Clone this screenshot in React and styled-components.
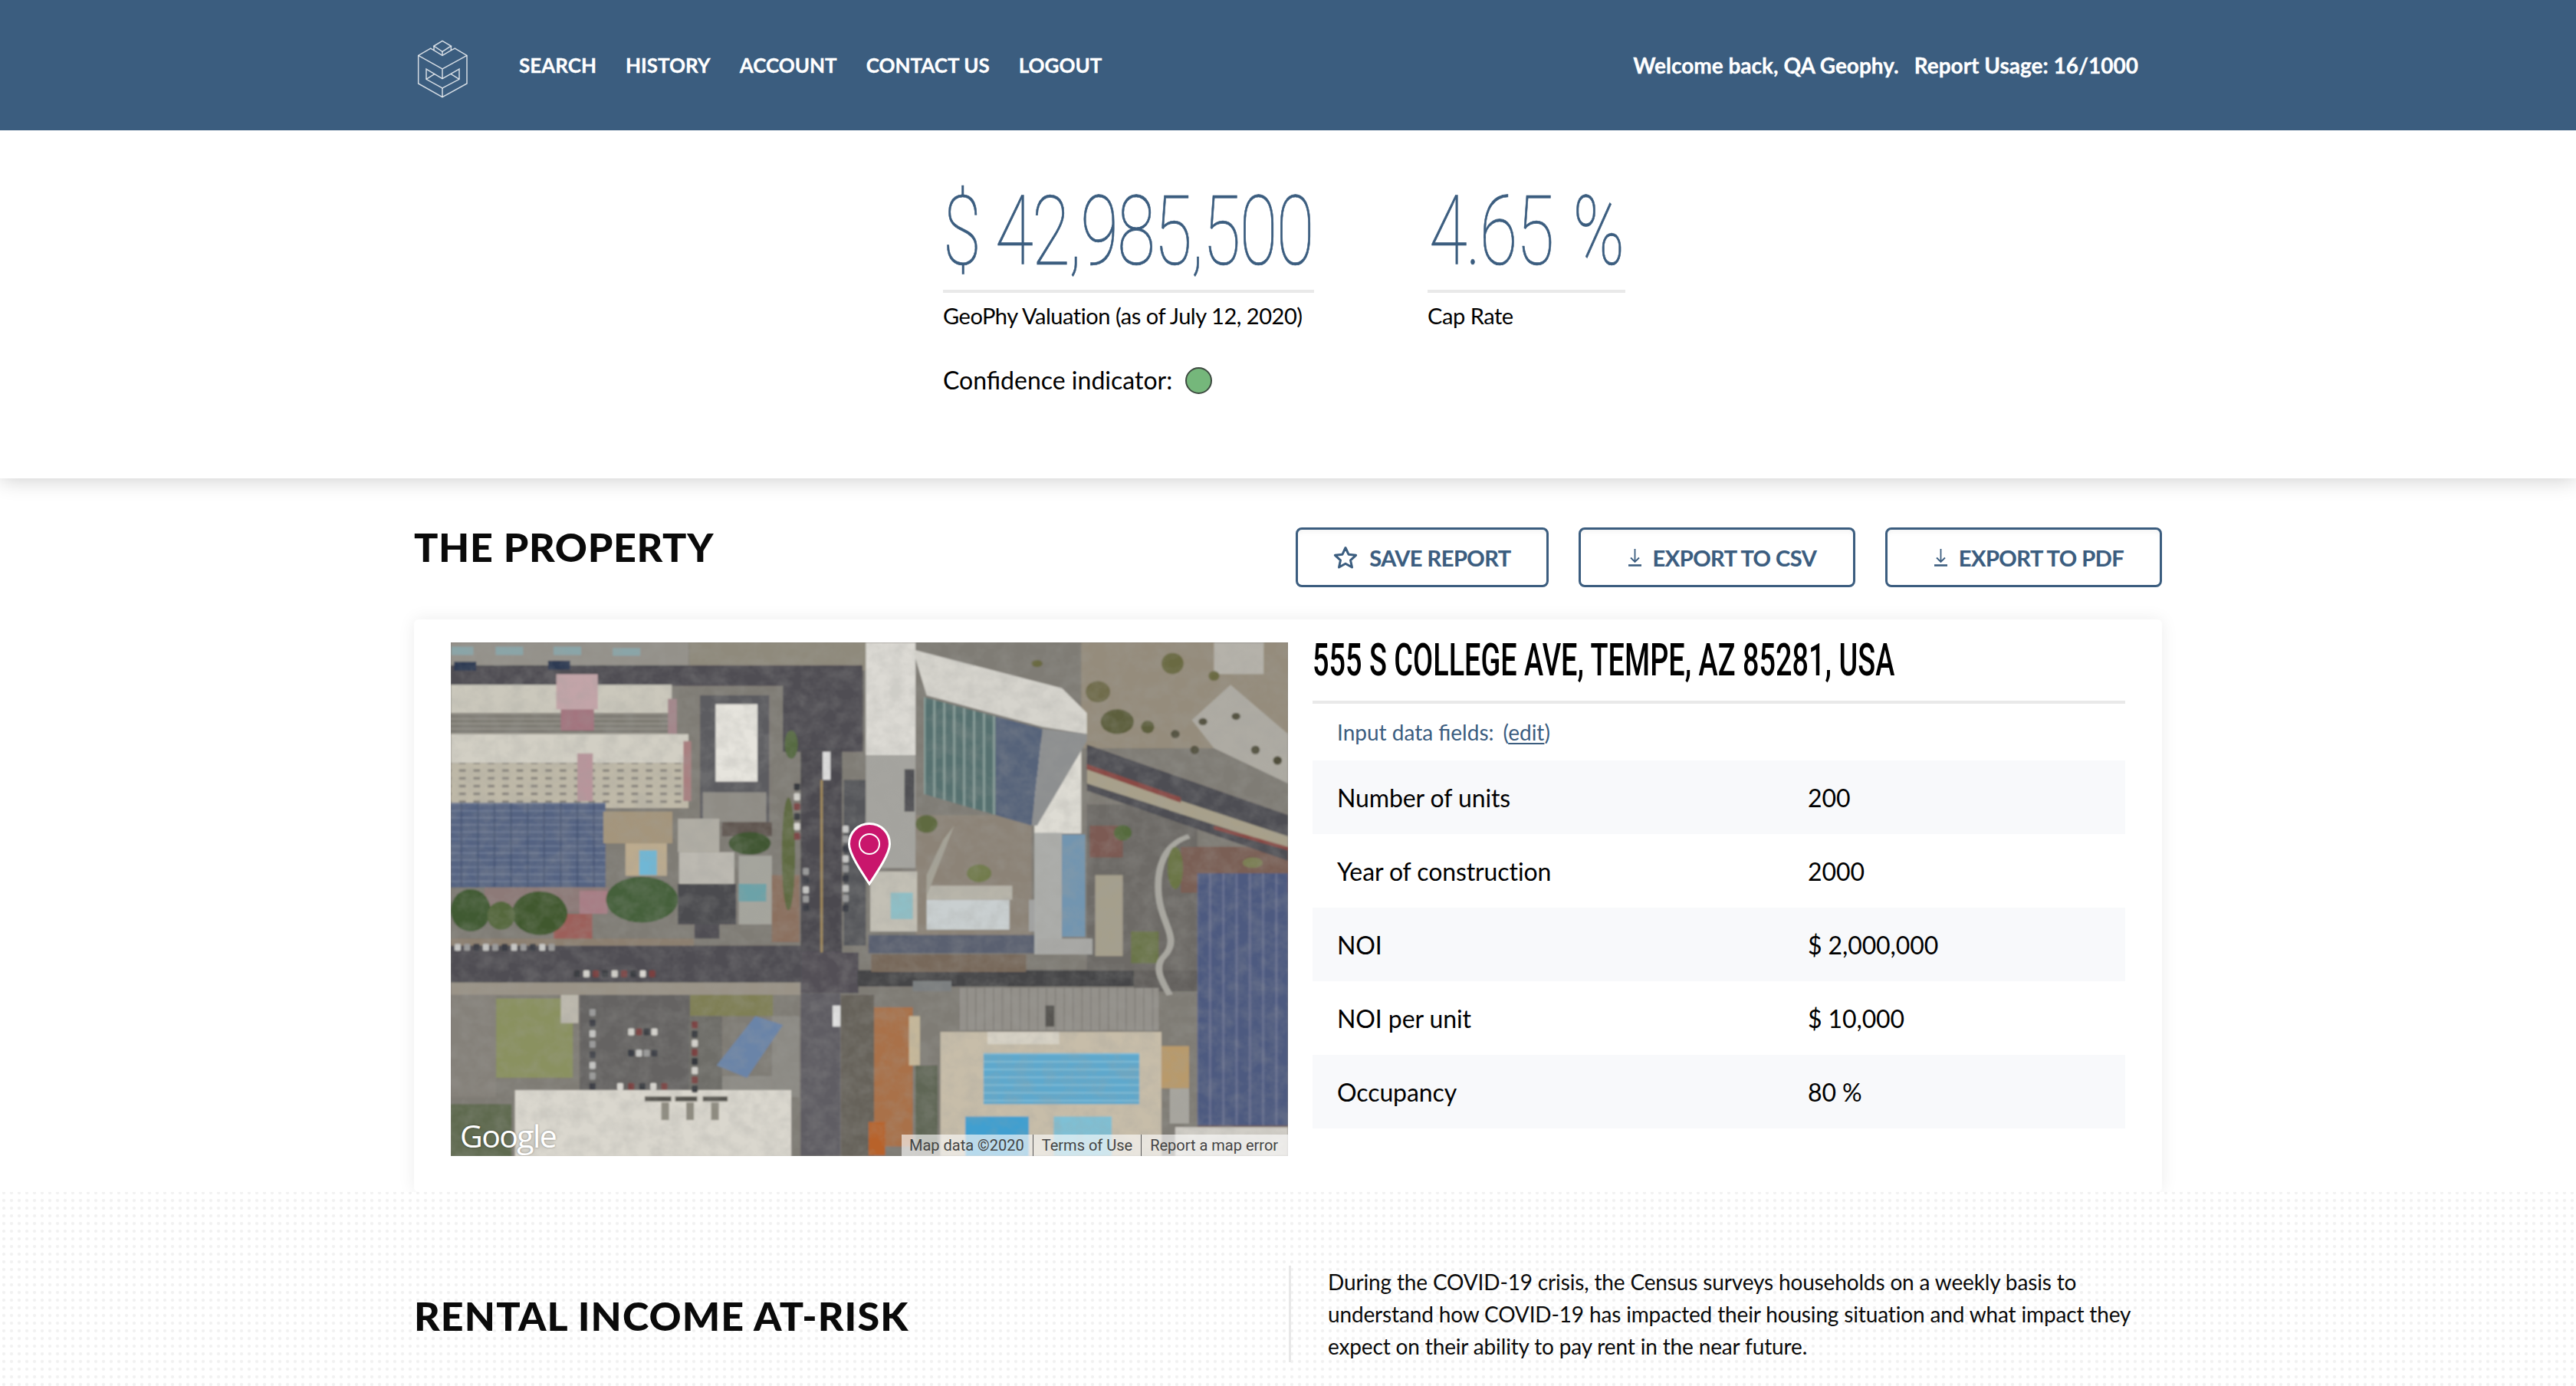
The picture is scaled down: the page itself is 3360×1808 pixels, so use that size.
import React from "react";
import styled, { createGlobalStyle } from "styled-components";

const Global = createGlobalStyle`
  html, body { margin: 0; padding: 0; background: #fff; }
  body { font-family: Lato, "Open Sans", sans-serif; color: #000; }
  * { box-sizing: border-box; }
`;

const blue = "#3b5d7f";

const Page = styled.div`
  width: 3360px;
  height: 1808px;
  overflow: hidden;
`;

const Container = styled.div`
  width: 2280px;
  margin: 0 auto;
`;

const Header = styled.header`
  height: 170px;
  background: ${blue};
  position: relative;
  z-index: 3;
`;

const HeaderInner = styled(Container)`
  height: 100%;
  display: flex;
  align-items: center;
  padding-right: 31px;
  color: #fff;
  font-weight: 700;
  -webkit-text-stroke: 0.3px #fff;
`;

const Logo = styled.svg`
  width: 100px;
  height: 100px;
  margin: 0 47px 0 -10px;
  flex: none;
`;

const Nav = styled.nav`
  display: flex;
  gap: 38px;
  font-size: 26px;
  letter-spacing: 0;
`;

const Greeting = styled.div`
  margin-left: auto;
  display: flex;
  gap: 20px;
  font-size: 28px;
  letter-spacing: 0;
`;

const Hero = styled.section`
  height: 454px;
  background: #fff;
  position: relative;
  z-index: 2;
  box-shadow: 0 2px 26px rgba(0, 0, 0, 0.2);
`;

const HeroInner = styled(Container)`
  padding: 66px 0 0 690px;
`;

const Stats = styled.div`
  display: flex;
  gap: 148px;
`;

const Stat = styled.div`
  width: ${(p) => p.$width}px;
`;

const Figure = styled.div`
  height: 146px;
  border-bottom: 4px solid #e9e9e9;
  color: ${blue};
  font-family: Roboto, sans-serif;
  font-weight: 100;
  font-size: 126px;
  line-height: 132px;
  letter-spacing: -2.3px;
  word-spacing: ${(p) => p.$wordGap || 0}px;
  white-space: nowrap;
  -webkit-text-stroke: 0.7px ${blue};
`;

const FigureText = styled.span`
  display: inline-block;
  transform: scaleX(0.72);
  transform-origin: left center;
  margin-left: ${(p) => p.$shift || 0}px;
`;

const StatLabel = styled.div`
  margin-top: 12px;
  font-size: 29px;
  line-height: 36px;
  letter-spacing: -0.45px;
`;

const Confidence = styled.div`
  margin-top: 46px;
  display: flex;
  align-items: center;
  gap: 17px;
  font-size: 32px;
  line-height: 40px;
`;

const Dot = styled.span`
  width: 35px;
  height: 35px;
  border-radius: 50%;
  background: #75b77b;
  border: 2px solid #3d4a40;
`;

const Property = styled(Container)`
  padding-top: 64px;
`;

const SectionBar = styled.div`
  display: flex;
  justify-content: space-between;
  align-items: flex-start;
`;

const Heading = styled.h2`
  margin: 0;
  font-size: 52px;
  line-height: 50px;
  font-weight: 900;
  letter-spacing: ${(p) => p.$tracking}px;
  color: #0a0a0a;
`;

const Actions = styled.div`
  display: flex;
  gap: 39px;
`;

const Button = styled.button`
  height: 78px;
  width: ${(p) => p.$width}px;
  display: flex;
  align-items: center;
  justify-content: center;
  gap: 15px;
  padding: 0 0 0 ${(p) => p.$inset || 0}px;
  background: #fff;
  border: 3px solid ${blue};
  border-radius: 8px;
  box-shadow: inset 0 6px 10px -6px rgba(0, 0, 0, 0.08);
  color: ${blue};
  font-family: Lato, sans-serif;
  font-weight: 700;
  font-size: 29px;
  letter-spacing: -0.5px;
  -webkit-text-stroke: 0.2px ${blue};
`;

const Card = styled.div`
  margin-top: 42px;
  height: 747px;
  padding: 30px 48px 0;
  display: flex;
  gap: 32px;
  background: #fff;
  border-radius: 6px;
  box-shadow: 0 0 22px rgba(0, 0, 0, 0.08);
`;

const MapBox = styled.div`
  position: relative;
  width: 1092px;
  height: 670px;
  flex: none;
  overflow: hidden;
  background: #7f7b75;
`;

const MapArt = styled.svg`
  display: block;
  width: 100%;
  height: 100%;
`;

const Pin = styled.svg`
  position: absolute;
  left: 518px;
  top: 235px;
  width: 56px;
  height: 82px;
`;

const GoogleMark = styled.span`
  position: absolute;
  left: 12px;
  bottom: 1px;
  color: #fff;
  font-family: "Open Sans", sans-serif;
  font-size: 41px;
  line-height: 52px;
  letter-spacing: -1.6px;
  text-shadow: 0 0 3px rgba(0, 0, 0, 0.35);
`;

const Attribution = styled.div`
  position: absolute;
  right: 0;
  bottom: 0;
  height: 28px;
  width: 504px;
  display: flex;
  padding-left: 10px;
  background: rgba(255, 255, 255, 0.62);
  color: #444;
  font-family: Roboto, sans-serif;
  font-size: 20px;
  line-height: 28px;
  white-space: nowrap;
`;

const AttrItem = styled.span`
  padding-right: 11px;
  margin-right: 11px;
  border-right: ${(p) => (p.$last ? "0" : "1px solid #555")};
`;

const Details = styled.div`
  width: 1060px;
`;

const Address = styled.div`
  height: 80px;
  border-bottom: 4px solid #e9e9e9;
  font-family: Roboto, sans-serif;
  font-weight: 500;
  font-size: 59px;
  line-height: 46px;
  white-space: nowrap;
  color: #000;
`;

const AddressText = styled.span`
  display: inline-block;
  transform: scaleX(0.642);
  transform-origin: left center;
`;

const InputNote = styled.div`
  height: 74px;
  padding-left: 32px;
  display: flex;
  align-items: center;
  gap: 12px;
  font-size: 28px;
  color: ${blue};
`;

const EditLink = styled.span`
  u { text-underline-offset: 3px; }
`;

const Row = styled.div`
  height: 96px;
  padding-left: 32px;
  display: grid;
  grid-template-columns: 614px 1fr;
  align-items: center;
  font-size: 32px;
  letter-spacing: -0.1px;
  background: ${(p) => (p.$striped ? "#f8f9fb" : "transparent")};
`;

const Rental = styled.section`
  height: 254px;
  position: relative;
  z-index: 1;
  background-color: #fff;
  background-image: radial-gradient(circle, #f1f1f1 1.4px, transparent 2.6px);
  background-size: 10px 10px;
  background-position: 0 -4px;
`;

const RentalInner = styled(Container)`
  padding-top: 96px;
  display: grid;
  grid-template-columns: 1141px 1fr;
`;

const RentalHeading = styled(Heading)`
  align-self: center;
  margin-top: 4px;
`;

const Intro = styled.p`
  margin: 0;
  padding-left: 48px;
  border-left: 3px solid #e8e8e8;
  height: 126px;
  font-size: 28px;
  line-height: 42px;
  letter-spacing: -0.15px;
  color: #0a0a0a;
`;

// logo traced from the reference, 300 unit box
const logoLines = [
  "M108 75 141 55 175 75 141 97Z",
  "M108 75V92L141 112 175 92V75M141 97V112",
  "M108 92 95 84 47 112V222L141 275 237 222V112L190 84 175 92",
  "M47 112 141 165 237 112M141 165V203",
  "M78 165V205L141 240 207 205V165L141 203Z",
  "M78 205 110 185M207 205 175 185M141 240V275",
];

const Star = () => (
  <svg width="32" height="30" viewBox="0 0 32 30" fill="none" stroke={blue} strokeWidth="3" strokeLinejoin="round">
    <path d="M16 2.5 20 11.2 29.6 12.3 22.5 18.8 24.5 28 16 23.3 7.5 28 9.5 18.8 2.4 12.3 12 11.2Z" />
  </svg>
);

const DownloadIcon = () => (
  <svg width="17" height="24" viewBox="0 0 17 24" fill="none" stroke={blue}>
    <path d="M8.5 1V18M3 12.5 8.5 18 14 12.5" strokeWidth="1.8" />
    <path d="M0 22.5H17" strokeWidth="2.6" />
  </svg>
);

// aerial picture, in units of a 1515x1457 box starting at 39,40
const blocks = [
  [39, 40, 430, 66, "#94918a"], [470, 40, 320, 80, "#8f8a7c"],
  [39, 105, 745, 58, "#4f4d52"], [640, 120, 145, 230, "#4f4e53"],
  [40, 52, 40, 24, "#8aa5a8"], [120, 52, 50, 24, "#8aa5a8"], [225, 52, 50, 24, "#8aa5a8"], [332, 56, 50, 22, "#8aa5a8"],
  [45, 95, 40, 25, "#2d3a52"], [215, 92, 40, 25, "#2d3a52"],
  [39, 160, 400, 80, "#cbc8bc"], [39, 240, 400, 62, "url(#balcony)"], [230, 130, 75, 100, "#c2a4a8"], [238, 230, 60, 60, "#a3747f"],
  [432, 200, 16, 100, "#a4858a"],
  [39, 300, 430, 82, "#d2cfc4"], [39, 382, 430, 128, "url(#facade)"], [268, 355, 28, 135, "#b8959b"], [460, 320, 14, 170, "#a97f80"],
  [39, 495, 280, 240, "url(#solar)"], [100, 735, 225, 70, "#8d7a78"], [272, 745, 50, 65, "#a87d85"],
  [490, 190, 125, 360, "#5c5c61"], [518, 215, 76, 220, "#e6e4dd"], [495, 465, 115, 85, "#8f8c85"], [530, 550, 90, 40, "#5f5450"],
  [315, 520, 125, 90, "#a4957b"], [355, 610, 75, 92, "#bcab8e"], [380, 630, 32, 70, "#6fb7d5"],
  [450, 540, 75, 95, "#b0ada4"], [452, 635, 100, 90, "#bcb9b1"], [450, 725, 105, 115, "#4b4b50"], [480, 840, 45, 40, "#4f4e52"],
  [560, 645, 60, 195, "#a5a59d"], [560, 725, 50, 50, "#6ca2a8"], [620, 700, 50, 190, "#8b6f5f"], [225, 810, 70, 85, "#9c5e5a"],
  [39, 900, 640, 105, "#504e52"], [39, 880, 440, 20, "#8c7f70"], [39, 1005, 640, 35, "#9a9387"],
  [672, 340, 75, 585, "#4c4a50"], [708, 430, 4, 490, "#a58d5c"], [712, 350, 14, 80, "#dfdfdf"], [750, 430, 40, 470, "#55575a"],
  [672, 920, 105, 115, "#525056"], [775, 970, 500, 46, "#454446"], [672, 1035, 72, 462, "#5f5d63"], [730, 1070, 14, 60, "#e0e0e0"],
  [745, 1040, 60, 457, "#66625a"], [875, 1000, 70, 30, "#7b7f80"],
  [790, 40, 90, 320, "#dcdad4"], [790, 360, 90, 320, "#a5a49f"], [860, 400, 18, 120, "#4f4f52"],
  [880, 530, 210, 340, "#8c8377"], [798, 690, 85, 170, "#c3c0b5"], [835, 750, 40, 75, "#8ec0c8"], [900, 770, 150, 85, "#c9cfd0"], [900, 730, 155, 40, "#b8b5aa"],
  [795, 870, 305, 52, "#5a6170"], [800, 925, 280, 50, "#77685a"], [1085, 770, 20, 90, "#a2a3a2"],
  [1180, 40, 374, 300, "#958c7b"], [1420, 40, 90, 90, "#b5b2aa"],
  [1190, 500, 200, 470, "#6d6a66"], [1195, 560, 60, 90, "#7c5a52"], [1205, 700, 50, 230, "#a59f8c"], [1270, 860, 50, 90, "#6a7548"],
  [1095, 320, 85, 262, "#dedcd4"], [1095, 580, 50, 345, "#acadaa"], [1145, 585, 42, 290, "#7295b0"], [1100, 880, 100, 45, "#a9a9a6"],
  [1360, 620, 200, 130, "#7a5f55"], [1390, 695, 164, 715, "url(#solarBlue)"],
  [1275, 970, 115, 60, "#625f5c"], [1390, 1410, 164, 30, "#6d5c58"],
  [960, 1020, 360, 120, "url(#roofRibs)"], [1115, 1070, 16, 60, "#55534f"], [925, 1145, 400, 352, "#c7bda9"], [1003, 1205, 282, 145, "url(#lanes)"],
  [970, 1385, 115, 112, "#3f9fd0"], [1130, 1385, 105, 112, "#7fc0d5"], [1325, 1185, 50, 120, "#b99a6a"], [1340, 1305, 35, 100, "#a7a59e"],
  [1010, 1145, 130, 35, "#d8d3c6"], [1350, 1415, 204, 82, "#d0cdc6"],
  [805, 1075, 70, 395, "#a9714a"], [868, 1100, 20, 140, "#c6b89a"], [880, 1240, 40, 240, "#5f6654"], [795, 1400, 30, 95, "#b8622c"],
  [120, 1050, 140, 225, "#8a9160"], [238, 1040, 32, 80, "#bdb9ae"], [272, 1040, 200, 270, "#656362"], [39, 1040, 82, 290, "#85817a"], [472, 1040, 150, 60, "#7f7f55"],
  [470, 1100, 60, 210, "#6e6d67"], [530, 1270, 140, 60, "#8d8b85"], [620, 1100, 50, 230, "#8c8a84"],
  [155, 1310, 500, 190, "#dad7ce"], [39, 1350, 110, 150, "#5f6a50"], [390, 1328, 48, 14, "#55534d"], [445, 1328, 40, 14, "#55534d"], [495, 1328, 45, 14, "#55534d"],
  [420, 1345, 14, 50, "#8e8b80"], [465, 1345, 14, 50, "#8e8b80"], [510, 1345, 14, 50, "#8e8b80"],
];

const polys = [
  ["875,60 1145,170 1190,240 1190,300 1110,280 900,190", "#d6d4cd"],
  ["895,195 1025,250 1025,530 895,470", "url(#glass)"],
  ["1025,250 1110,285 1090,560 1025,530", "#56647a"],
  ["1110,285 1190,300 1190,320 1100,560 1090,560", "#8d8f90"],
  ["1380,260 1450,160 1554,300 1554,440 1420,340", "#aeaba3"],
  ["1190,330 1554,530 1554,660 1190,460", "#4e4e52"],
  ["1190,400 1554,590 1554,625 1190,440", "#a8a08a"],
  ["1190,385 1360,480 1360,495 1190,400", "#8a4a44"],
  ["1420,560 1554,620 1554,630 1420,570", "#8a4a44"],
  ["590,1100 640,1125 575,1275 520,1240", "#6a84a8"],
  ["900,700 930,600 950,560 900,760", "#a5a296"],
];

const trees = [
  [75, 800, 36, 60, "#3f5a32"], [200, 808, 50, 62, "#40592f"], [130, 815, 25, 40, "#55683c"], [385, 770, 65, 65, "#44603a"],
  [580, 610, 38, 32, "#3f5733"], [995, 695, 22, 25, "#6f7a4a"], [900, 555, 20, 25, "#5e6a40"], [1245, 265, 30, 35, "#5d5f3d"],
  [1345, 100, 20, 30, "#6b6a42"], [1210, 180, 22, 30, "#6f6c4c"], [1490, 665, 18, 15, "#7c7f55"], [655, 330, 12, 40, "#566a42"],
  [650, 640, 12, 160, "#5f6a42"], [1255, 580, 16, 22, "#546a3c"], [1350, 680, 14, 60, "#6b7545"],
  [1400, 265, 8, 10, "#4d4c38"], [1460, 250, 8, 10, "#4d4c38"], [1385, 345, 8, 12, "#4d4c38"], [1495, 345, 8, 12, "#4d4c38"], [1535, 375, 8, 12, "#4d4c38"],
  [1300, 280, 12, 18, "#5d5f3d"], [1350, 300, 8, 12, "#4d4c38"], [1420, 135, 10, 14, "#6b6a42"], [1100, 100, 10, 10, "#6b6a42"],
];

const carColors = ["#c9c9c7", "#34373d", "#9a9a9a", "#d8d6d0", "#3a3d45", "#7a3f3f"];
// [x, y, step in x, step in y, count]
const carRows = [
  [46, 895, 17, 0, 11], [262, 970, 17, 0, 9], [290, 1080, 0, 30, 8], [360, 1135, 14, 0, 4], [360, 1195, 14, 0, 4],
  [475, 1115, 0, 26, 8], [748, 560, 0, 28, 9], [660, 440, 0, 28, 6], [676, 680, 0, 26, 5], [340, 1290, 20, 0, 5],
];
const cars = carRows.flatMap(([x, y, dx, dy, n], i) =>
  Array.from({ length: n }, (_, c) => [x + dx * c, y + dy * c, carColors[(c * 2 + i) % carColors.length]])
);

const rows = [
  ["Number of units", "200"],
  ["Year of construction", "2000"],
  ["NOI", "$ 2,000,000"],
  ["NOI per unit", "$ 10,000"],
  ["Occupancy", "80 %"],
];

const Aerial = () => (
  <MapArt viewBox="39 40 1515 1457" preserveAspectRatio="none">
    <defs>
      <filter id="soft" x="-2%" y="-2%" width="104%" height="104%">
        <feGaussianBlur stdDeviation="1.8" />
      </filter>
      <filter id="grain" x="0" y="0" width="100%" height="100%">
        <feTurbulence type="fractalNoise" baseFrequency="0.035 0.025" numOctaves="3" seed="7" />
        <feColorMatrix values="0 0 0 0 0.35  0 0 0 0 0.35  0 0 0 0 0.33  1.6 1.6 0 0 -1.25" />
      </filter>
      <pattern id="facade" width="26" height="22" patternUnits="userSpaceOnUse">
        <rect width="26" height="22" fill="#bfb9a8" />
        <rect x="2" y="4" width="12" height="7" fill="#85817a" />
      </pattern>
      <pattern id="balcony" width="40" height="14" patternUnits="userSpaceOnUse">
        <rect width="40" height="14" fill="#8b8880" />
        <rect y="10" width="40" height="3" fill="#6b6962" />
      </pattern>
      <pattern id="glass" width="18" height="60" patternUnits="userSpaceOnUse">
        <rect width="18" height="60" fill="#56716f" />
        <rect x="12" width="4" height="60" fill="#8a9f9b" />
      </pattern>
      <pattern id="roofRibs" width="16" height="30" patternUnits="userSpaceOnUse">
        <rect width="16" height="30" fill="#93908a" />
        <rect x="12" width="2" height="30" fill="#807d77" />
      </pattern>
      <pattern id="solar" width="30" height="20" patternUnits="userSpaceOnUse">
        <rect width="30" height="20" fill="#546382" />
        <rect y="16" width="30" height="3" fill="#74809c" />
        <rect x="27" width="2" height="20" fill="#44516f" />
      </pattern>
      <pattern id="solarBlue" width="24" height="30" patternUnits="userSpaceOnUse">
        <rect width="24" height="30" fill="#4e5a80" />
        <rect x="19" width="4" height="30" fill="#666f90" />
      </pattern>
      <pattern id="lanes" width="40" height="22" patternUnits="userSpaceOnUse">
        <rect width="40" height="22" fill="#5fa8cc" />
        <rect y="18" width="40" height="3" fill="#8cc5dc" />
      </pattern>
    </defs>
    <g filter="url(#soft)">
      <rect x="39" y="40" width="1515" height="1457" fill="#7f7b75" />
      {blocks.map(([x, y, w, h, fill], i) => (
        <rect key={i} x={x} y={y} width={w} height={h} fill={fill} />
      ))}
      {polys.map(([points, fill], i) => (
        <polygon key={i} points={points} fill={fill} />
      ))}
      <path
        d="M1375 590C1330 610 1315 680 1320 760 1325 840 1360 880 1330 930 1310 960 1325 1000 1340 1040"
        fill="none"
        stroke="#a9a7a0"
        strokeWidth="12"
      />
      {trees.map(([cx, cy, rx, ry, fill], i) => (
        <ellipse key={i} cx={cx} cy={cy} rx={rx} ry={ry} fill={fill} />
      ))}
      {cars.map(([x, y, fill], i) => (
        <rect key={i} x={x} y={y} width="11" height="20" rx="3" fill={fill} />
      ))}
    </g>
    <rect x="39" y="40" width="1515" height="1457" filter="url(#grain)" opacity="0.22" />
  </MapArt>
);

const App = () => (
  <Page>
    <Global />
    <Header>
      <HeaderInner>
        <Logo viewBox="0 0 300 300" fill="none" stroke="rgba(255,255,255,.78)" strokeWidth="4.5">
          {logoLines.map((d) => (
            <path key={d} d={d} />
          ))}
        </Logo>
        <Nav>
          <span>SEARCH</span>
          <span>HISTORY</span>
          <span>ACCOUNT</span>
          <span>CONTACT US</span>
          <span>LOGOUT</span>
        </Nav>
        <Greeting>
          <span>Welcome back, QA Geophy.</span>
          <span>Report Usage: 16/1000</span>
        </Greeting>
      </HeaderInner>
    </Header>

    <Hero>
      <HeroInner>
        <Stats>
          <Stat $width={484}>
            <Figure>
              <FigureText>$ 42,985,500</FigureText>
            </Figure>
            <StatLabel>GeoPhy Valuation (as of July 12, 2020)</StatLabel>
          </Stat>
          <Stat $width={258}>
            <Figure $wordGap={8}>
              <FigureText $shift={2}>4.65 %</FigureText>
            </Figure>
            <StatLabel>Cap Rate</StatLabel>
          </Stat>
        </Stats>
        <Confidence>
          Confidence indicator:
          <Dot />
        </Confidence>
      </HeroInner>
    </Hero>

    <Property>
      <SectionBar>
        <Heading $tracking={0.7}>THE PROPERTY</Heading>
        <Actions>
          <Button $width={330}>
            <Star />
            SAVE REPORT
          </Button>
          <Button $width={361} $inset={14}>
            <DownloadIcon />
            EXPORT TO CSV
          </Button>
          <Button $width={361} $inset={14}>
            <DownloadIcon />
            EXPORT TO PDF
          </Button>
        </Actions>
      </SectionBar>
      <Card>
        <MapBox>
          <Aerial />
          <Pin viewBox="0 0 56 82">
            <path
              d="M28 1.5C13 1.5 1.5 13 1.5 28 1.5 40 16 62 28 80 40 62 54.500 40 54.500 28 54.500 13 43 1.500 28 1.500Z"
              fill="#c9166c"
              stroke="#fff"
              strokeWidth="3"
            />
            <circle cx="28" cy="28" r="13" fill="none" stroke="#fff" strokeWidth="2" />
          </Pin>
          <GoogleMark>Google</GoogleMark>
          <Attribution>
            <AttrItem>Map data ©2020</AttrItem>
            <AttrItem>Terms of Use</AttrItem>
            <AttrItem $last>Report a map error</AttrItem>
          </Attribution>
        </MapBox>
        <Details>
          <Address>
            <AddressText>555 S COLLEGE AVE, TEMPE, AZ 85281, USA</AddressText>
          </Address>
          <InputNote>
            <span>Input data fields:</span>
            <EditLink>
              (<u>edit</u>)
            </EditLink>
          </InputNote>
          {rows.map(([label, value], i) => (
            <Row key={label} $striped={i % 2 === 0}>
              <span>{label}</span>
              <span>{value}</span>
            </Row>
          ))}
        </Details>
      </Card>
    </Property>

    <Rental>
      <RentalInner>
        <RentalHeading $tracking={1.1}>RENTAL INCOME AT-RISK</RentalHeading>
        <Intro>
          During the COVID-19 crisis, the Census surveys households on a weekly basis to
          <br />
          understand how COVID-19 has impacted their housing situation and what impact they
          <br />
          expect on their ability to pay rent in the near future.
        </Intro>
      </RentalInner>
    </Rental>
  </Page>
);

export default App;
